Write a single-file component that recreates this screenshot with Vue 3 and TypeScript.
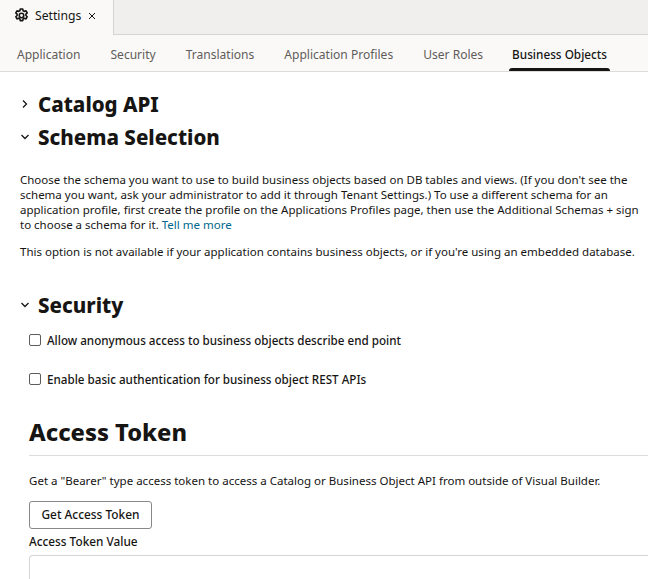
<script setup lang="ts">
const tabs: string[] = ['Application', 'Security', 'Translations', 'Application Profiles', 'User Roles', 'Business Objects']
</script>

<template>
  <div class="page">
    <div class="docbar">
      <div class="doctab">
        <svg class="gear" width="15" height="15" viewBox="0 0 16 16" fill="none" stroke="#161513" stroke-width="1.7" stroke-linejoin="round">
          <path d="M6.7 1h2.6l.4 1.9 1.2.7 1.9-.6 1.3 2.2-1.4 1.4v1.4l1.4 1.3-1.3 2.3-1.9-.6-1.2.7-.4 1.8H6.7l-.4-1.8-1.2-.7-1.9.6-1.3-2.3 1.4-1.3V6.6L1.9 5.2 3.2 3l1.9.6 1.2-.7z" />
          <circle cx="8" cy="8" r="2.4" />
        </svg>
        <span class="doclabel">Settings</span>
        <svg class="close" width="8" height="8" viewBox="0 0 8 8" stroke="#161513" stroke-width="1" fill="none"><path d="M1 1l6 6M7 1L1 7" /></svg>
      </div>
      <div class="docrest"></div>
    </div>
    <nav class="navbar">
      <span v-for="t in tabs" :key="t" class="navitem" :class="{ active: t === 'Business Objects' }">{{ t }}</span>
    </nav>
    <main class="content">
      <div class="section first">
        <svg class="chev" width="10" height="10" viewBox="0 0 10 10" fill="none" stroke="#161513" stroke-width="1.3"><path d="M3 1.5L6.5 5 3 8.5" /></svg>
        <h2>Catalog API</h2>
      </div>
      <div class="section">
        <svg class="chev" width="10" height="10" viewBox="0 0 10 10" fill="none" stroke="#161513" stroke-width="1.3"><path d="M1.5 3L5 6.5 8.5 3" /></svg>
        <h2>Schema Selection</h2>
      </div>
      <p class="para p1">Choose the schema you want to use to build business objects based on DB tables and views. (If you don't see the schema you want, ask your administrator to add it through Tenant Settings.) To use a different schema for an application profile, first create the profile on the Applications Profiles page, then use the Additional Schemas + sign to choose a schema for it. <a class="link">Tell me more</a></p>
      <p class="para p2">This option is not available if your application contains business objects, or if you're using an embedded database.</p>
      <div class="section third">
        <svg class="chev" width="10" height="10" viewBox="0 0 10 10" fill="none" stroke="#161513" stroke-width="1.3"><path d="M1.5 3L5 6.5 8.5 3" /></svg>
        <h2>Security</h2>
      </div>
      <div class="inner">
        <label class="check c1"><span class="box"></span>Allow anonymous access to business objects describe end point</label>
        <label class="check c2"><span class="box"></span>Enable basic authentication for business object REST APIs</label>
        <h1>Access Token</h1>
        <p class="para p3">Get a "Bearer" type access token to access a Catalog or Business Object API from outside of Visual Builder.</p>
        <button class="btn">Get Access Token</button>
        <div class="fieldlabel">Access Token Value</div>
        <div class="textarea"></div>
      </div>
    </main>
  </div>
</template>

<style scoped>
.page {
  width: 648px;
  height: 579px;
  overflow: hidden;
  background: #fff;
  font-family: "Noto Sans", "Open Sans", sans-serif;
  color: #161513;
  font-size: 12px;
}
.docbar { display: flex; height: 35px; background: #faf9f8; }
.doctab {
  width: 114px;
  flex: none;
  display: flex;
  align-items: center;
  padding: 0 0 5px 14px;
  box-sizing: border-box;
  border-right: 1px solid #d6d4d2;
}
.gear { flex: none; margin-right: 6px; }
.doclabel { font-size: 12.2px; }
.close { margin-left: 7px; margin-top: 2px; }
.docrest { flex: 1; background: #f1efed; border-bottom: 1px solid #d6d4d2; }
.navbar {
  display: flex;
  align-items: baseline;
  height: 37px;
  box-sizing: border-box;
  gap: 30px;
  padding-left: 17px;
  background: #faf9f8;
  border-bottom: 1px solid #dedcda;
}
.navitem {
  position: relative;
  height: 36px;
  font-size: 12.05px;
  line-height: 38px;
  color: #5f5c59;
}
.navitem.active { color: #161513; font-weight: 500; font-size: 11.75px; margin-left: -1px; }
.navitem.active::after {
  content: "";
  position: absolute;
  left: -3px;
  right: -3px;
  bottom: 0;
  height: 3px;
  background: #161513;
  border-radius: 3px 3px 0 0;
}
.content { padding: 0 0 0 20px; }
.section { display: flex; align-items: center; gap: 8px; height: 32px; }
.section.first { margin-top: 16px; }
.section.first + .section { margin-top: 1px; }
.section h2 { margin: 0; font-size: 20.5px; font-weight: 800; line-height: 32px; }
.chev { flex: none; }
.para { margin: 0; font-size: 11.5px; line-height: 15px; color: #161513; }
.link { color: #00688c; }
.p1 { margin-top: 19px; width: 620px; }
.p2 { margin-top: 12px; white-space: nowrap; }
.section.third { margin-top: 30px; }
.inner { padding-left: 9px; }
.check { display: flex; align-items: center; font-size: 11.65px; font-weight: 500; }
.c1 { margin-top: 10px; height: 18px; }
.c2 { margin-top: 21px; height: 18px; }
.box {
  width: 10px;
  height: 10px;
  border: 1px solid #5f5c59;
  border-radius: 2px;
  margin-right: 6px;
  flex: none;
}
h1 {
  margin: 28px 0 0;
  padding-bottom: 6px;
  font-size: 23.6px;
  line-height: 33px;
  font-weight: 800;
  border-bottom: 1px solid #dedcda;
}
.p3 { margin-top: 17px; font-size: 11.53px; white-space: nowrap; }
.btn {
  display: block;
  margin-top: 13px;
  width: 123px;
  height: 28px;
  padding: 0 0 2px;
  background: #fff;
  border: 1px solid #8a8785;
  border-radius: 3px;
  font: 500 11.9px "Noto Sans", sans-serif;
  color: #161513;
}
.fieldlabel { margin-top: 4px; font-size: 11.8px; font-weight: 500; line-height: 16px; }
.textarea {
  margin-top: 6px;
  height: 60px;
  border: 1px solid #d6d4d2;
  border-right: none;
  border-radius: 4px 0 0 0;
}
</style>
